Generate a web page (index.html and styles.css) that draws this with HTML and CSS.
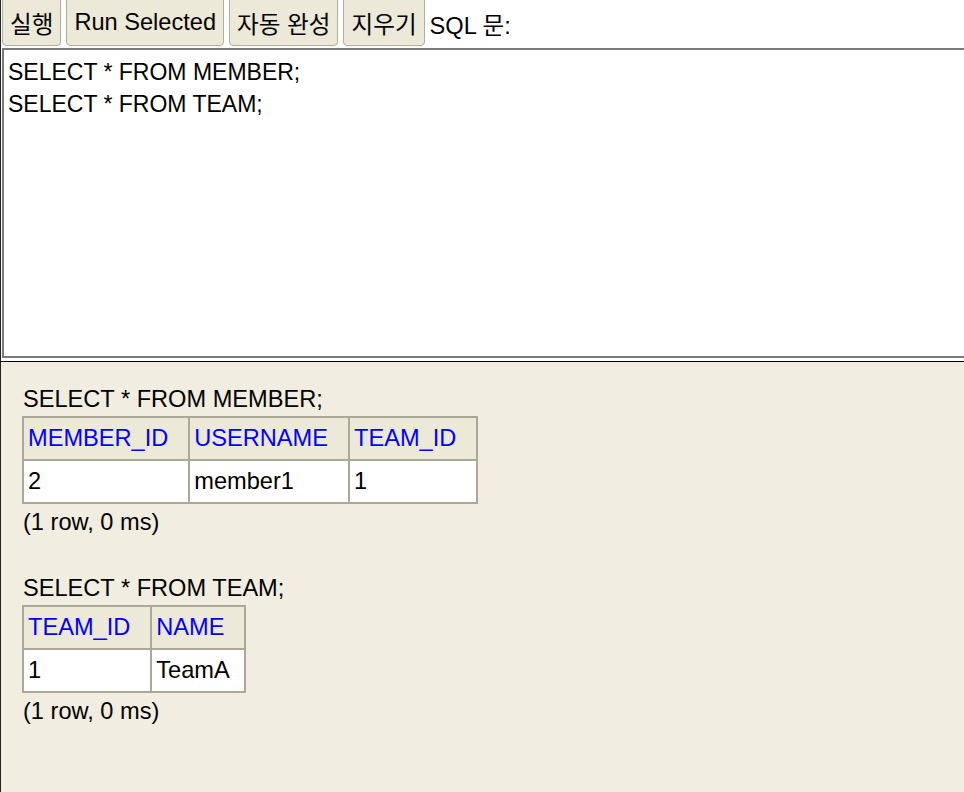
FILE: index.html
```html
<!DOCTYPE html>
<html lang="ko">
<head>
<meta charset="utf-8">
<title>H2 Console</title>
<link rel="stylesheet" href="styles.css">
</head>
<body>
<div class="query">
  <div class="toolbar">
    <button class="btn">실행</button>
    <button class="btn">Run Selected</button>
    <button class="btn">자동 완성</button>
    <button class="btn">지우기</button>
    <span class="label">SQL 문:</span>
  </div>
  <textarea class="sql" spellcheck="false">SELECT * FROM MEMBER;
SELECT * FROM TEAM;</textarea>
</div>
<div class="result">
  <div class="stmt">SELECT * FROM MEMBER;</div>
  <table class="grid">
    <tr><th>MEMBER_ID</th><th>USERNAME</th><th>TEAM_ID</th></tr>
    <tr><td>2</td><td>member1</td><td>1</td></tr>
  </table>
  <div class="stat">(1 row, 0 ms)</div>
  <div class="stmt second">SELECT * FROM TEAM;</div>
  <table class="grid">
    <tr><th>TEAM_ID</th><th>NAME</th></tr>
    <tr><td>1</td><td>TeamA</td></tr>
  </table>
  <div class="stat">(1 row, 0 ms)</div>
</div>
</body>
</html>
```
FILE: styles.css
```css
html, body {
  margin: 0;
  padding: 0;
  height: 100%;
  overflow: hidden;
}
body {
  font-family: "Liberation Sans", Arial, "Noto Sans CJK KR", sans-serif;
  font-size: 23.6px;
  color: #000;
  background: #fff;
  display: flex;
  flex-direction: column;
}
.query {
  height: 361px;
  border-left: 1px solid #222;
  padding-left: 1px;
  background: #fff;
  overflow: hidden;
  flex: none;
}
.toolbar {
  display: flex;
  align-items: flex-start;
  gap: 5px;
  height: 52px;
  margin-top: -4px;
  padding-left: 0;
}
.btn {
  font-family: "Liberation Sans", Arial, "Noto Sans CJK KR", sans-serif;
  font-size: 23.6px;
  background: #ece9d8;
  border: 1.5px solid #b2ae9c;
  border-radius: 4px;
  height: 50px;
  padding: 3px 7px 0;
  margin: 0;
  color: #000;
}
.label {
  align-self: center;
  margin-top: 3px;
  white-space: nowrap;
}
.sql {
  display: block;
  box-sizing: border-box;
  width: calc(100% + 20px);
  height: 310px;
  margin: 0;
  border: 2px solid #7a7a7a;
  border-right: none;
  padding: 6px 4px;
  font-family: "Liberation Sans", Arial, sans-serif;
  font-size: 23px;
  line-height: 32px;
  resize: none;
  outline: none;
  overflow: hidden;
}
.result {
  flex: 1;
  background: #f1eee1;
  border-top: 1px solid #000;
  border-left: 1px solid #222;
  padding: 19px 0 0 21px;
  line-height: 36px;
}
.stmt {
  padding-left: 1px;
}
.stmt.second {
  margin-top: 30px;
}
.stat {
  padding-left: 1px;
}
.grid {
  border-collapse: collapse;
  border: 2px solid #aca899;
  line-height: 27px;
  margin-top: -1px;
}
.grid th, .grid td {
  border: 2px solid #aca899;
  padding: 7px 4px 7px 4px;
  text-align: left;
  font-weight: normal;
}
.grid th {
  background: #ece9d8;
  color: #0000ff;
  padding-right: 20px;
}
.grid td {
  background: #fff;
}
```
